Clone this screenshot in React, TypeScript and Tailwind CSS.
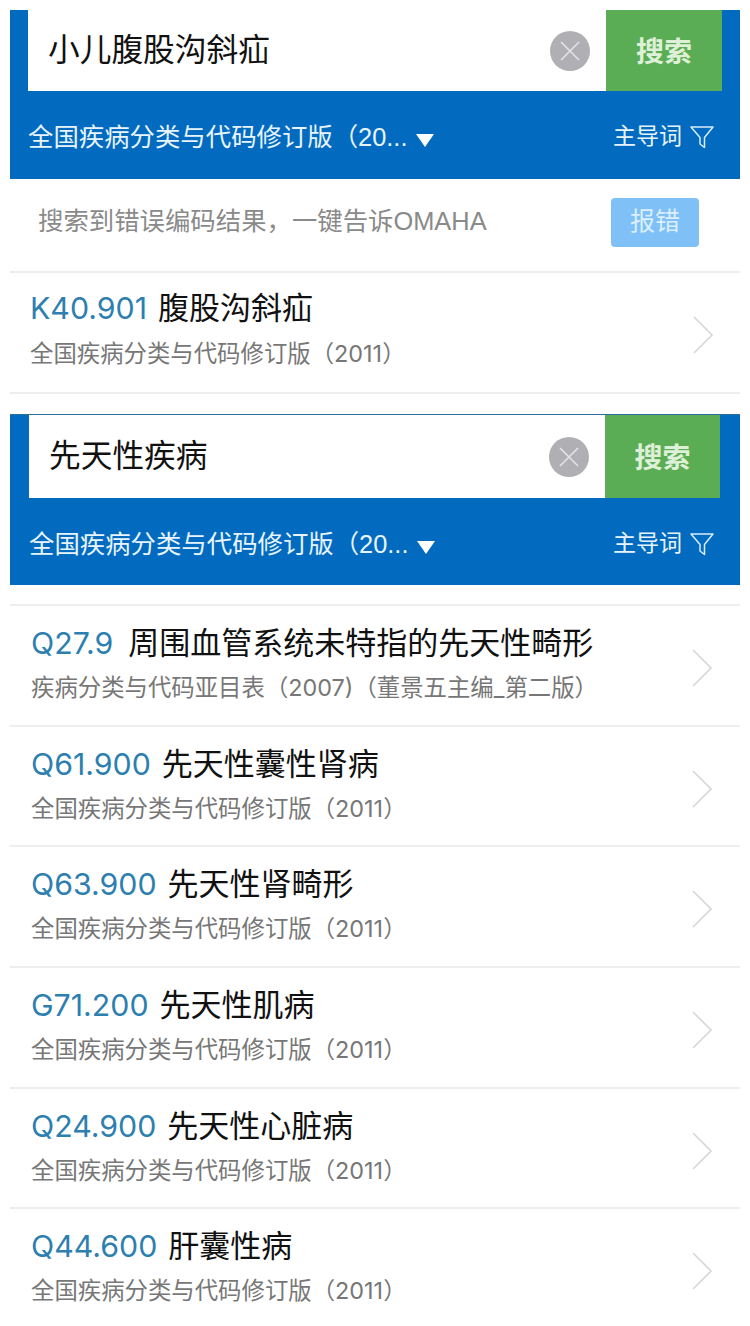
const CJK = "font-['Liberation_Sans','Noto_Sans_CJK_SC',sans-serif]";
const LATIN = "font-['Inter','Noto_Sans_CJK_SC',sans-serif]";

interface Result {
  code: string;
  name: string;
  source: string;
}

const SOURCE_2011 = '全国疾病分类与代码修订版（2011）';

const results: Result[] = [
  { code: 'Q27.9', name: '周围血管系统未特指的先天性畸形', source: '疾病分类与代码亚目表（2007)（董景五主编_第二版）' },
  { code: 'Q61.900', name: '先天性囊性肾病', source: SOURCE_2011 },
  { code: 'Q63.900', name: '先天性肾畸形', source: SOURCE_2011 },
  { code: 'G71.200', name: '先天性肌病', source: SOURCE_2011 },
  { code: 'Q24.900', name: '先天性心脏病', source: SOURCE_2011 },
  { code: 'Q44.600', name: '肝囊性病', source: SOURCE_2011 },
];

function ClearIcon() {
  return (
    <svg width="40" height="40" viewBox="0 0 40 40" className="shrink-0">
      <circle cx="20" cy="20" r="20" fill="#b0afb3" />
      <path d="M11 11 L29 29 M29 11 L11 29" stroke="#e4e4e6" strokeWidth="1.6" fill="none" />
    </svg>
  );
}

function FilterIcon() {
  return (
    <svg width="24" height="24" viewBox="0 0 24 24" className="shrink-0">
      <path d="M1 2 H23 L14.5 12.5 V22.5 L10 19 V12.5 Z" stroke="#d8ecfa" strokeWidth="1.5" fill="none" strokeLinejoin="round" />
    </svg>
  );
}

function Chevron() {
  return (
    <svg width="22" height="38" viewBox="0 0 22 38" className="shrink-0 mt-[5px]">
      <path d="M2 1 L20 19 L2 37" stroke="#d6d6d6" strokeWidth="1.6" fill="none" />
    </svg>
  );
}

function SearchHeader({ query, second }: { query: string; second?: boolean }) {
  return (
    <div className={second ? 'bg-[#026bc0] h-[171px] border-t border-[#2b6f9c]' : 'bg-[#026bc0] h-[169px]'}>
      <div className={second ? 'flex h-[83px] ml-[19px] mr-[20px]' : 'flex h-[81px] ml-[18px] mr-[18px]'}>
        <div className="flex-1 flex items-center bg-white pl-[20px] pr-[16px]">
          <span className="flex-1 text-[31.7px] leading-none text-[#111]">{query}</span>
          <ClearIcon />
        </div>
        <div className={second ? 'w-[115px] flex items-center justify-center pt-[5px] bg-[#5bad55] text-[#dff0d8] text-[28px] font-bold' : 'w-[116px] flex items-center justify-center pt-[5px] bg-[#5bad55] text-[#dff0d8] text-[28px] font-bold'}>
          搜索
        </div>
      </div>
      <div className={second ? 'flex items-center h-[88px] pl-[19px] pr-[26px]' : 'flex items-center h-[88px] pl-[18px] pr-[26px]'}>
        <span className="text-[25.4px] leading-none text-[#e8f4fc] whitespace-nowrap mt-[5px]">全国疾病分类与代码修订版（20...</span>
        <span className="ml-[9px] mt-[10px] w-0 h-0 border-l-[9px] border-r-[9px] border-t-[13px] border-l-transparent border-r-transparent border-t-white" />
        <span className="ml-auto text-[23px] leading-none text-[#e8f4fc] mt-[3px]">主导词</span>
        <span className="ml-[8px] mt-[4px]"><FilterIcon /></span>
      </div>
    </div>
  );
}

function ResultRow({ item, first }: { item: Result; first?: boolean }) {
  return (
    <div className={first ? 'flex items-center h-[121px] border-t-2 border-[#eeeeee] pl-[20px] pr-[26px]' : 'flex items-center h-[120.7px] border-t-2 border-[#eeeeee] pl-[21px] pr-[27px]'}>
      <div className={first ? 'flex-1 min-w-0 self-start pt-[13px]' : 'flex-1 min-w-0 self-start pt-[15px]'}>
        <div className="flex items-baseline h-[44px] whitespace-nowrap">
          <span className={item.code.length < 6 ? `${LATIN} text-[30.3px] leading-[44px] text-[#2d7fb0] mr-[15px]` : `${LATIN} text-[30.3px] leading-[44px] text-[#2d7fb0] mr-[11px]`}>{item.code}</span>
          <span className="text-[31px] leading-[44px] text-[#111]">{item.name}</span>
        </div>
        <div className={first ? `${LATIN} mt-[8px] text-[23.4px] leading-[32px] text-[#777] whitespace-nowrap` : `${LATIN} mt-[7px] text-[23.4px] leading-[32px] text-[#777] whitespace-nowrap`}>{item.source}</div>
      </div>
      <Chevron />
    </div>
  );
}

export default function App() {
  return (
    <div className={`${CJK} w-[750px] h-[1326px] overflow-hidden bg-white px-[10px] pt-[10px]`}>
      <SearchHeader query="小儿腹股沟斜疝" />

      <div className="flex items-center h-[92px] pb-[6px] pl-[28px] pr-[41px]">
        <span className="flex-1 text-[25.4px] leading-none text-[#8a8a8a] whitespace-nowrap">搜索到错误编码结果，一键告诉OMAHA</span>
        <span className="w-[88px] h-[49px] flex items-center justify-center rounded-[4px] bg-[#7fc1f7] text-[25px] text-[#dcefff]">报错</span>
      </div>

      <ResultRow first item={{ code: 'K40.901', name: '腹股沟斜疝', source: SOURCE_2011 }} />
      <div className="h-[22px] border-t-2 border-[#eeeeee]" />

      <SearchHeader second query="先天性疾病" />
      <div className="h-[19px]" />

      {results.map((item) => (
        <ResultRow key={item.code} item={item} />
      ))}
    </div>
  );
}
